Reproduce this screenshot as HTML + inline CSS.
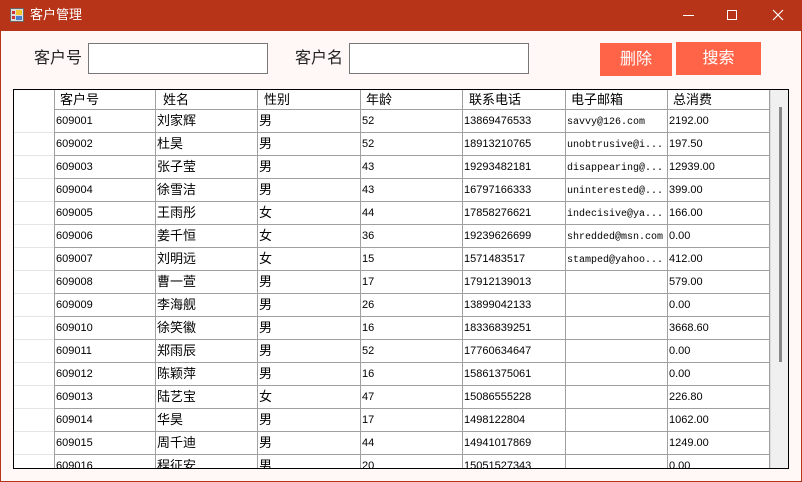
<!DOCTYPE html>
<html><head><meta charset="utf-8"><style>
*{margin:0;padding:0;box-sizing:border-box}
body{width:802px;height:482px;overflow:hidden;background:#fff;font-family:"Liberation Sans","Noto Sans CJK SC",sans-serif;position:relative}
.win{position:absolute;left:0;top:0;width:802px;height:482px;border:1px solid #B83418;background:#FFF8F7}
.title{position:absolute;left:-1px;top:-1px;width:802px;height:31px;background:#B83418;color:#fff}
.abs{position:absolute}
.lbl{font-size:16px;color:#222;line-height:18px}
.inp{position:absolute;background:#fff;border:1px solid #777}
.btn{position:absolute;background:#FF6348;color:#fff;font-size:16px;text-align:center}
.grid{position:absolute;left:12px;top:88px;width:776px;height:380px;border:1px solid #000;background:#fff;overflow:hidden}
.c{position:absolute;font-size:11px;color:#000;white-space:nowrap;line-height:13px}
.m{font-family:"Liberation Mono",monospace;font-size:10px}
.z{font-size:13px;line-height:14px}
.vl{position:absolute;top:0;width:1px;height:380px;background:#A0A0A0}
.hl{position:absolute;left:40px;width:716px;height:1px;background:#A0A0A0}
.rl{position:absolute;left:0;width:40px;height:1px;background:#E6E6E6}
</style></head><body>
<div class="win">
<div class="title">
 <svg class="abs" style="left:10px;top:8px" width="14" height="14"><rect x="0.5" y="0.5" width="13" height="13" fill="#ddd" stroke="#666"/><rect x="6" y="2" width="6" height="5" fill="#f4c430"/><rect x="2" y="3" width="3" height="3" fill="#c33"/><rect x="2" y="8" width="3" height="3" fill="#c33"/><rect x="6" y="8" width="6" height="4" fill="#4a7fd0"/></svg>
 <div class="abs" style="left:30px;top:7px;font-size:13px;line-height:16px">客户管理</div>
 <div class="abs" style="left:683px;top:15px;width:11px;height:1px;background:#fff"></div>
 <div class="abs" style="left:727px;top:10px;width:10px;height:10px;border:1px solid #fff"></div>
 <svg class="abs" style="left:772px;top:9px" width="12" height="12"><path d="M1 1L11 11M11 1L1 11" stroke="#fff" stroke-width="1.2"/></svg>
</div>
<div class="abs lbl" style="left:33px;top:49px">客户号</div>
<div class="inp" style="left:87px;top:42px;width:180px;height:31px"></div>
<div class="abs lbl" style="left:294px;top:49px">客户名</div>
<div class="inp" style="left:348px;top:42px;width:180px;height:31px"></div>
<div class="btn" style="left:599px;top:42px;width:72px;height:33px;line-height:33px">删除</div>
<div class="btn" style="left:675px;top:41px;width:85px;height:33px;line-height:33px">搜索</div>
<div class="grid" id="g">
 <div class="abs" style="left:756px;top:0;width:18px;height:380px;background:#F0F0F0;border-left:1px solid #ddd"></div>
 <div class="abs" style="left:765px;top:17px;width:3px;height:255px;background:#888"></div>
 <div class="vl" style="left:40px"></div><div class="vl" style="left:141px"></div><div class="vl" style="left:243px"></div><div class="vl" style="left:346px"></div><div class="vl" style="left:448px"></div><div class="vl" style="left:551px"></div><div class="vl" style="left:653px"></div><div class="vl" style="left:755px"></div>
 <div class="c z" style="left:46px;top:3px">客户号</div><div class="c z" style="left:149px;top:3px">姓名</div><div class="c z" style="left:250px;top:3px">性别</div><div class="c z" style="left:352px;top:3px">年龄</div><div class="c z" style="left:455px;top:3px">联系电话</div><div class="c z" style="left:557px;top:3px">电子邮箱</div><div class="c z" style="left:659px;top:3px">总消费</div>
</div>
</div>
<script>
var d=[["609001","刘家辉","男","52","13869476533","savvy@126.com","2192.00"],["609002","杜昊","男","52","18913210765","unobtrusive@i...","197.50"],["609003","张子莹","男","43","19293482181","disappearing@...","12939.00"],["609004","徐雪洁","男","43","16797166333","uninterested@...","399.00"],["609005","王雨彤","女","44","17858276621","indecisive@ya...","166.00"],["609006","姜千恒","女","36","19239626699","shredded@msn.com","0.00"],["609007","刘明远","女","15","1571483517","stamped@yahoo...","412.00"],["609008","曹一萱","男","17","17912139013","","579.00"],["609009","李海舰","男","26","13899042133","","0.00"],["609010","徐笑徽","男","16","18336839251","","3668.60"],["609011","郑雨辰","男","52","17760634647","","0.00"],["609012","陈颖萍","男","16","15861375061","","0.00"],["609013","陆艺宝","女","47","15086555228","","226.80"],["609014","华昊","男","17","1498122804","","1062.00"],["609015","周千迪","男","44","14941017869","","1249.00"],["609016","程征安","男","20","15051527343","","0.00"]];
var x=[42,143,245,348,450,553,655],h="";
h+='<div class="hl" style="top:19px"></div>';
for(var i=0;i<d.length;i++){var t=20+23*i;
h+='<div class="hl" style="top:'+(t+22)+'px"></div><div class="rl" style="top:'+(t+22)+'px"></div>';
for(var j=0;j<7;j++){var cl=(j==1||j==2)?"c z":(j==5?"c m":"c");var tp=(j==1||j==2)?t+4:(j==5?t+6:t+5);
h+='<div class="'+cl+'" style="left:'+x[j]+'px;top:'+tp+'px">'+d[i][j]+'</div>';}}
document.getElementById("g").insertAdjacentHTML("beforeend",h);
</script>
</body></html>
